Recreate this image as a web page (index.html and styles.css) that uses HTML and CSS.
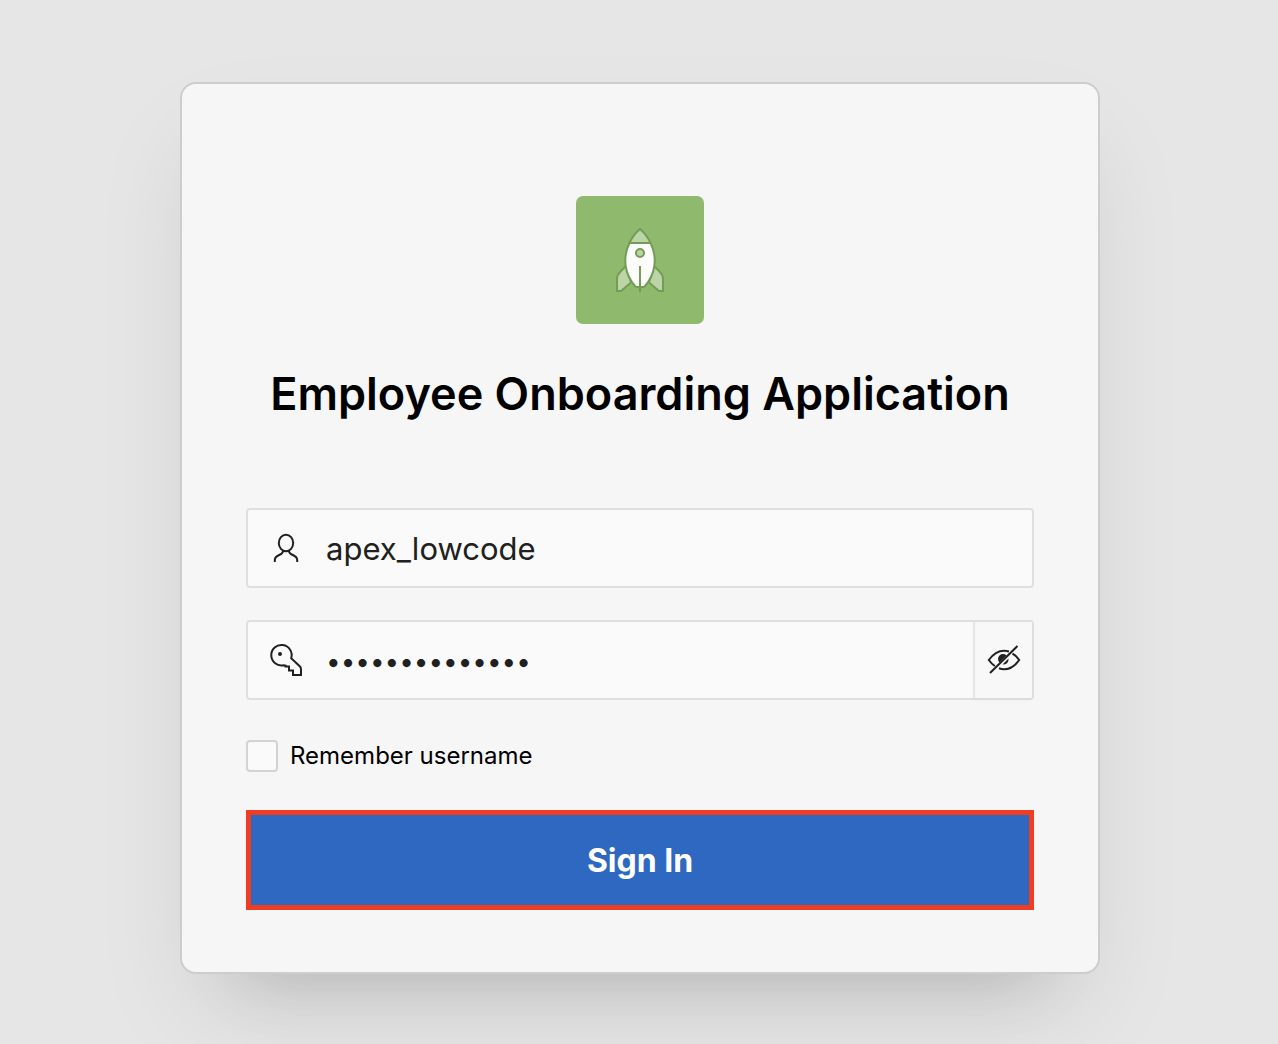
FILE: index.html
```html
<!DOCTYPE html>
<html lang="en">
<head>
<meta charset="utf-8">
<meta name="viewport" content="width=device-width, initial-scale=1">
<title>Employee Onboarding Application</title>
<link rel="stylesheet" href="styles.css">
</head>
<body>
<main class="login-page">
  <form class="login-card">
    <svg class="app-logo" viewBox="0 0 128 128" aria-hidden="true">
      <rect width="128" height="128" rx="7" fill="#8fb96d"/>
      <g stroke="#749c56" stroke-width="2">
        <path d="M50 70 L44.500 75.500 Q41 79 41 83 V95 H45 L55 86.500 Z" fill="#bbd5a6"/>
        <path d="M78 70 L83.500 75.500 Q87 79 87 83 V95 H83 L73 86.500 Z" fill="#bbd5a6"/>
        <path d="M53.500 47 H74.500 C82 62 79 79 69 90 Q68 91 67 91 H61 Q60 91 59 90 C49 79 46 62 53.500 47 Z" fill="#fcfdfb"/>
        <path d="M53.500 47 Q57 39 64 33 Q71 39 74.500 47 Z" fill="#bbd5a6" stroke-linejoin="round"/>
        <circle cx="64" cy="57" r="4" fill="#bbd5a6"/>
        <path d="M64 70 V96" fill="none"/>
      </g>
    </svg>
    <h1 class="app-title">Employee Onboarding Application</h1>
    <div class="fields">
      <div class="field">
        <label class="field-icon" for="username" aria-label="Username">
          <svg class="icon" viewBox="0 0 40 40"><ellipse cx="20" cy="15" rx="7.200" ry="8.200"/><path d="M17 22.500 C17.500 28 8.800 26 8.800 32 V34 M23 22.500 C22.500 28 31.200 26 31.200 32 V34"/></svg>
        </label>
        <input class="field-input" id="username" type="text" value="apex_lowcode" autocomplete="username">
      </div>
      <div class="field">
        <label class="field-icon" for="password" aria-label="Password">
          <svg class="icon" viewBox="0 0 40 40"><path d="M25.200 18.300 A10.200 10.200 0 1 0 17.500 25.200 L19.500 25.500 V26.500 H23 V30.500 H27 V35 H35 V29.500 Q35 27.500 34 26.500 L25.200 18.300 Z"/><circle class="icon-dot" cx="14" cy="14" r="2"/></svg>
        </label>
        <input class="field-input password-input" id="password" type="password" value="lowcode4people" autocomplete="current-password">
        <button class="reveal-button" type="button" aria-label="Show password">
          <svg class="icon" viewBox="0 0 40 40"><path d="M10.800 26 Q7.500 23.800 4.800 20 Q11.500 10.700 20 10.700 Q22.700 10.700 25 11.500 M28.500 13.700 Q32.500 16 35.200 20 Q28.500 29.300 20 29.300 Q17.500 29.300 15 28.300 M6 33 L33.500 6"/><path class="icon-dot" d="M15.500 22.500 A4.800 4.800 0 0 1 22.500 15.500 Z M18.500 24.500 L24.500 18.500 Q25 24.500 18.500 24.500 Z"/></svg>
        </button>
      </div>
    </div>
    <label class="remember"><input class="remember-box" type="checkbox">Remember username</label>
    <button class="sign-in" type="submit">Sign In</button>
  </form>
</main>
</body>
</html>
```
FILE: styles.css
```css
* {
  box-sizing: border-box;
}

body {
  margin: 0;
  min-height: 100vh;
  background: #e6e6e6;
  color: #000;
  font-family: Inter, "Liberation Sans", sans-serif;
}

.login-page {
  display: flex;
  justify-content: center;
  padding: 82px 0 70px 2px;
  overflow: hidden;
}

.login-card {
  display: flex;
  flex-direction: column;
  width: 100%;
  max-width: 920px;
  padding: 112px 64px 62px;
  background: #f6f6f6;
  border: 2px solid #cdcdcd;
  border-radius: 16px;
  box-shadow: 0 64px 64px -64px rgba(0, 0, 0, 0.15), 0 48px 96px -16px rgba(0, 0, 0, 0.1);
}

.app-logo {
  width: 128px;
  height: 128px;
  align-self: center;
}

.app-title {
  margin: 38px 0 82px;
  font-size: 45px;
  font-weight: 600;
  line-height: 64px;
  text-align: center;
}

.fields {
  display: flex;
  flex-direction: column;
  gap: 32px;
}

.field {
  display: flex;
  height: 80px;
  background: #fafafa;
  border: 2px solid #dfdfdf;
  border-radius: 4px;
}

.field-icon {
  display: flex;
  align-items: center;
  padding: 0 18px;
}

.icon {
  width: 40px;
  height: 40px;
  fill: none;
  stroke: #202020;
  stroke-width: 2;
}

.icon .icon-dot {
  fill: #202020;
  stroke: none;
}

.field-input {
  flex: 1;
  min-width: 0;
  padding: 0 2px;
  background: transparent;
  border: 0;
  outline: 0;
  color: #202020;
  font: 400 31px Inter, "Liberation Sans", sans-serif;
}

.field-input.password-input {
  padding: 2px 2px 0;
  font-size: 26px;
}

.reveal-button {
  width: 59px;
  padding: 2px 8px 0;
  background: #f8f8f8;
  border: 0;
  border-left: 2px solid #e6e6e6;
  border-radius: 0 2px 2px 0;
  box-shadow: 0 4px 4px rgba(0, 0, 0, 0.02);
}

.remember {
  display: flex;
  align-items: center;
  gap: 12px;
  align-self: flex-start;
  margin: 40px 0 38px;
  font-size: 24px;
  line-height: 32px;
}

.remember-box {
  appearance: none;
  width: 32px;
  height: 32px;
  margin: 0;
  background: #fafafa;
  border: 2px solid #d3d3d3;
  border-radius: 4px;
}

.sign-in {
  height: 100px;
  background: #2f68c1;
  border: 5px solid #ed3e23;
  color: #fff;
  font: 700 32px Inter, "Liberation Sans", sans-serif;
}
```
